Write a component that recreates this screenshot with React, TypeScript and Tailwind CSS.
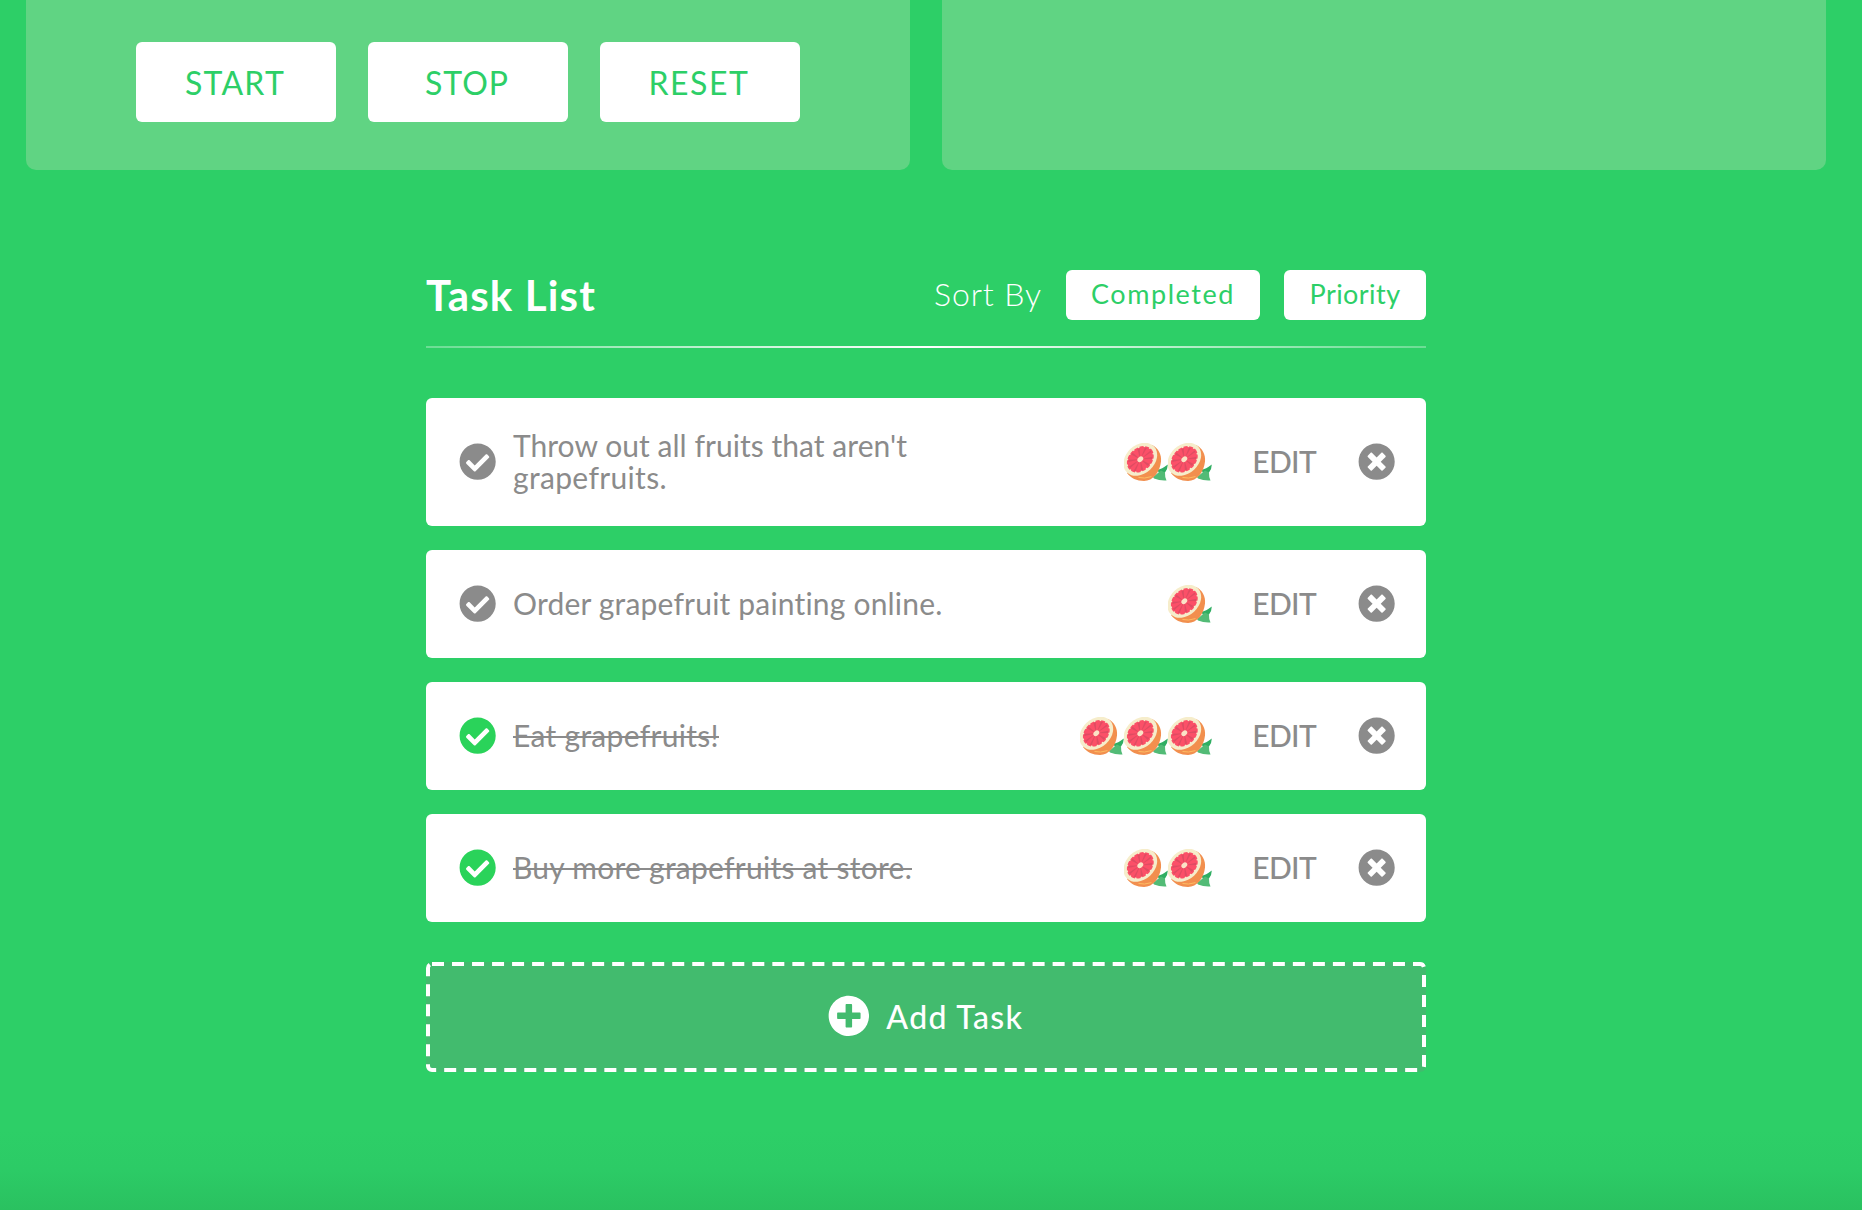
import { useLayoutEffect, useRef, useState } from 'react';
import { FaCheckCircle, FaPlusCircle, FaTimesCircle } from 'react-icons/fa';

/* A line of text whose tracking is adjusted so that it fills a given width. */
function Fit({ text, width, className = '' }: { text: string; width: number; className?: string }) {
  const ref = useRef<HTMLSpanElement>(null);
  const [spacing, setSpacing] = useState(0);
  useLayoutEffect(() => {
    const el = ref.current;
    if (!el) return;
    el.style.letterSpacing = '0px';
    const next = (width - el.getBoundingClientRect().width) / text.length;
    el.style.letterSpacing = `${next}px`;
    setSpacing(next);
  }, [text, width]);
  return (
    <span ref={ref} className={`inline-block whitespace-pre ${className}`} style={{ letterSpacing: spacing }}>
      {text}
    </span>
  );
}

const wedges = [8, 44, 80, 116, 152, 188, 224, 260, 296, 332];

function Grapefruit() {
  return (
    <svg viewBox="0 0 44 40" className="h-10 w-11 shrink-0">
      <path d="M33 27Q38 26 43.800 21.500Q43.800 26 41 29.500L37 32Z" fill="#2fae62" />
      <path d="M29 34L37 27.500L41 29.500Q40.800 34 42.500 37.500Q36 38 30 35.500Z" fill="#52bb76" />
      <path d="M28 2C34.500 5 37.800 12 37 18.500C36 29 29 38 20 38C13 38 6.500 35 3 30Z" fill="#f28f4e" />
      <path d="M14.500 34.500Q20 36 27.500 33.600" stroke="#fdbd63" strokeWidth="1" fill="none" />
      <g transform="translate(16.300 16.300) rotate(-43)">
        <ellipse rx="18.800" ry="14.300" fill="#f6edcb" />
        <ellipse rx="14.200" ry="10.600" fill="#fb5068" />
        <ellipse rx="14.200" ry="10.600" fill="none" stroke="#fb5068" strokeWidth="1.600" strokeDasharray="4 1.500" />
        {wedges.map((a) => (
          <path key={a} d="M0 0L13.500 -1.200L13.500 1.400Z" fill="#df4c62" transform={`scale(1 .74) rotate(${a})`} />
        ))}
        <ellipse rx="3.300" ry="2.400" fill="#fbe3c6" />
      </g>
    </svg>
  );
}

type Task = { lines: [string, number][]; done: boolean; priority: number };

const tasks: Task[] = [
  { lines: [["Throw out all fruits that aren't", 394], ['grapefruits.', 154]], done: false, priority: 2 },
  { lines: [['Order grapefruit painting online.', 430]], done: false, priority: 1 },
  { lines: [['Eat grapefruits!', 206]], done: true, priority: 3 },
  { lines: [['Buy more grapefruits at store.', 399]], done: true, priority: 2 },
];

const timerButtons: [string, number][] = [
  ['START', 100],
  ['STOP', 84],
  ['RESET', 101],
];

function TaskRow({ task }: { task: Task }) {
  return (
    <li
      className={`flex items-center rounded-md bg-white pr-[30.500px] pl-[32.500px] text-[30px] leading-8 text-[#8b8b8b] ${
        task.lines.length > 1 ? 'h-32' : 'h-[108px]'
      }`}
    >
      <FaCheckCircle className={`size-[37.300px] shrink-0 ${task.done ? 'text-[#2ad35a]' : ''}`} />
      <div className="ml-[17.200px] flex flex-1 flex-col items-start pb-[3px]">
        {task.lines.map(([text, width]) => (
          <Fit key={text} text={text} width={width} className={task.done ? 'line-through decoration-2' : ''} />
        ))}
      </div>
      <div className="mt-0.5 flex">
        {Array.from({ length: task.priority }, (_, i) => (
          <Grapefruit key={i} />
        ))}
      </div>
      <button className="mr-[42px] ml-10 pb-[3px] font-medium">
        <Fit text="EDIT" width={64} />
      </button>
      <FaTimesCircle className="size-[37.300px] shrink-0" />
    </li>
  );
}

export default function App() {
  return (
    <div className="flex h-[1210px] w-full flex-col overflow-hidden bg-[#2dcf67] font-['Lato',sans-serif]">
      <div className="grid grid-cols-2 gap-8 pr-9 pl-[26px]">
        <section className="flex h-[170px] justify-center gap-8 rounded-b-[10px] bg-[#60d483] pt-[42px]">
          {timerButtons.map(([label, width]) => (
            <button key={label} className="h-20 w-[200px] rounded-md bg-white pt-0.5 pr-0.5 text-[32px] text-[#2dcf67]">
              <Fit text={label} width={width} />
            </button>
          ))}
        </section>
        <section className="h-[170px] rounded-b-[10px] bg-[#60d483]" />
      </div>

      <main className="ml-[426px] w-[1000px] pt-[100px]">
        <header className="flex h-[50px] items-center">
          <h1 className="flex-1 text-[42px] leading-[50px] font-bold text-white">
            <Fit text="Task List" width={170} />
          </h1>
          <span className="mr-6 pb-[3px] text-[32px] leading-10 font-light text-white">
            <Fit text="Sort By" width={108} />
          </span>
          <button className="mr-6 h-[50px] w-[194px] rounded-md bg-white pb-px text-[27px] text-[#2dcf67]">
            <Fit text="Completed" width={144} />
          </button>
          <button className="h-[50px] w-[142px] rounded-md bg-white pb-px text-[27px] text-[#2dcf67]">
            <Fit text="Priority" width={91} />
          </button>
        </header>
        <div className="mt-[26px] h-0.5 bg-linear-to-r from-white/30 via-white to-white/30" />

        <ul className="mt-[50px] flex flex-col gap-6">
          {tasks.map((task) => (
            <TaskRow key={task.lines[0][0]} task={task} />
          ))}
        </ul>

        <button className="relative mt-10 flex h-[110px] w-full items-center justify-center gap-[17px] rounded-md bg-[#42bb6e] pr-px text-[32px] font-medium text-white">
          <svg className="absolute inset-0 size-full" fill="none">
            <rect x="2" y="2" width="996" height="106" rx="4" stroke="white" strokeWidth="4" strokeDasharray="12 8.020" />
          </svg>
          <FaPlusCircle className="size-[41.700px] -translate-y-px" />
          <Fit text="Add Task" width={137} />
        </button>
      </main>
      <div className="mt-auto h-20 shrink-0 bg-linear-to-b from-[#2dcf67] via-[#2ccb66] to-[#2ac160]" />
    </div>
  );
}
